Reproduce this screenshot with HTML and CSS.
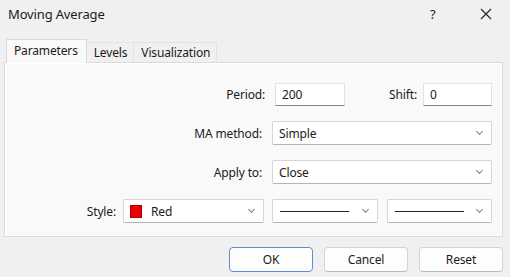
FILE: index.html
```html
<!doctype html>
<html>
<head>
	<meta http-equiv="content-type" content="text/html;charset=utf-8"/>
	<title>Moving Average</title>
	<link rel="stylesheet" href="styles.css">
</head>
<body>
	<div class="dialog">
		<div class="titlebar">
			<span class="title">Moving Average</span>
			<span class="help">?</span>
			<span class="close">
				<svg width="12" height="12" viewBox="0 0 12 12"><path d="M1 1 L11 11 M11 1 L1 11" stroke="#222" stroke-width="1.1" fill="none"/></svg>
			</span>
		</div>
		<div class="tabs">
			<span class="tab active">Parameters</span>
			<span class="tab">Levels</span>
			<span class="tab">Visualization</span>
		</div>
		<div class="panel">
			<div class="row">
				<label class="lbl">Period:</label>
				<div class="field input w-period">200</div>
				<label class="lbl lbl-shift">Shift:</label>
				<div class="field input w-shift">0</div>
			</div>
			<div class="row">
				<label class="lbl">MA method:</label>
				<div class="field select w-wide"><span>Simple</span><i class="chev"></i></div>
			</div>
			<div class="row">
				<label class="lbl">Apply to:</label>
				<div class="field select w-wide"><span>Close</span><i class="chev"></i></div>
			</div>
			<div class="row row-style">
				<label class="lbl">Style:</label>
				<div class="field select w-color"><span class="swatch"></span><span>Red</span><i class="chev"></i></div>
				<div class="field select w-line"><span class="line"></span><i class="chev"></i></div>
				<div class="field select w-line2"><span class="line"></span><i class="chev"></i></div>
			</div>
		</div>
		<div class="buttons">
			<button class="btn default">OK</button>
			<button class="btn">Cancel</button>
			<button class="btn">Reset</button>
		</div>
	</div>
</body>
</html>
```

FILE: styles.css
```css
body {
    margin: 0;
    background: #f0f0f0;
    font-family: "Noto Sans", "Open Sans", sans-serif;
    font-size: 12px;
    letter-spacing: -0.15px;
    color: #1b1b1b;
}
.dialog {
    width: 510px;
    height: 277px;
    overflow: hidden;
}

/* title bar */
.titlebar {
    display: flex;
    align-items: center;
    height: 27px;
    padding-left: 8px;
}
.title {
    font-size: 13px;
    flex: 1;
}
.help {
    font-size: 13px;
    width: 50px;
}
.close {
    width: 30px;
    display: flex;
}

/* tabs */
.tabs {
    display: flex;
    align-items: flex-end;
    height: 23px;
    margin-top: 12px;
    padding-left: 6px;
}
.tab {
    height: 20px;
    line-height: 19px;
    padding: 0 6px 0 7px;
    border: 1px solid #e2e2e2;
    border-bottom: none;
    box-sizing: border-box;
    margin-right: -1px;
}
.tab.active {
    line-height: 22px;
    padding: 0 8px 0 7px;
    background: #f9f9f9;
    border-color: #dadada;
    position: relative;
    z-index: 1;
    margin-bottom: -1px;
    height: 24px;
}

/* panel */
.panel {
    margin: 0 7px 0 4px;
    height: 175px;
    box-sizing: border-box;
    background: #f9f9f9;
    border: 1px solid #dadada;
    box-shadow: inset 0 0 0 1px #fff;
    padding: 20px 10px 0 0;
    display: flex;
    flex-direction: column;
    gap: 15px;
}
.row {
    display: flex;
    justify-content: flex-end;
    align-items: center;
}
.lbl {
    margin-right: 10px;
}
.lbl-shift {
    margin-left: 44px;
    margin-right: 6px;
}
.row-style .lbl {
    margin-right: 7px;
}
.field {
    box-sizing: border-box;
    background: #fff;
    border: 1px solid #e3e3e3;
    display: flex;
    align-items: center;
    padding-left: 6px;
}
.input {
    height: 23px;
    border-bottom: 1px solid #868686;
}
.select {
    height: 24px;
    border-color: #d6d6d6;
    border-bottom-color: #b4b4b4;
    border-radius: 2px;
    position: relative;
}
.w-period { width: 70px; }
.w-shift { width: 69px; }
.w-wide { width: 220px; }
.w-color { width: 141px; margin-right: 8px; }
.w-line { width: 106px; margin-right: 9px; }
.w-line2 { width: 105px; }
.chev {
    position: absolute;
    right: 9px;
    top: 7px;
    width: 4px;
    height: 4px;
    border-right: 1px solid #808080;
    border-bottom: 1px solid #808080;
    transform: rotate(45deg);
}
.swatch {
    width: 12px;
    height: 13px;
    background: #ee0000;
    border: 1px solid #a00;
    box-sizing: border-box;
    margin-right: 9px;
}
.line {
    width: 69px;
    height: 1px;
    background: #222;
    margin-left: 1px;
}

/* buttons */
.buttons {
    display: flex;
    justify-content: flex-end;
    gap: 11px;
    padding: 10px 7px 0 0;
}
.btn {
    font-family: inherit;
    font-size: 12px;
    letter-spacing: -0.15px;
    color: #1b1b1b;
    width: 84px;
    height: 25px;
    background: #fdfdfd;
    border: 1px solid #d3d3d3;
    border-bottom-color: #bbb;
    border-radius: 4px;
    padding: 0;
}
.btn.default {
    border: 1px solid #5a8fcf;
}
```
